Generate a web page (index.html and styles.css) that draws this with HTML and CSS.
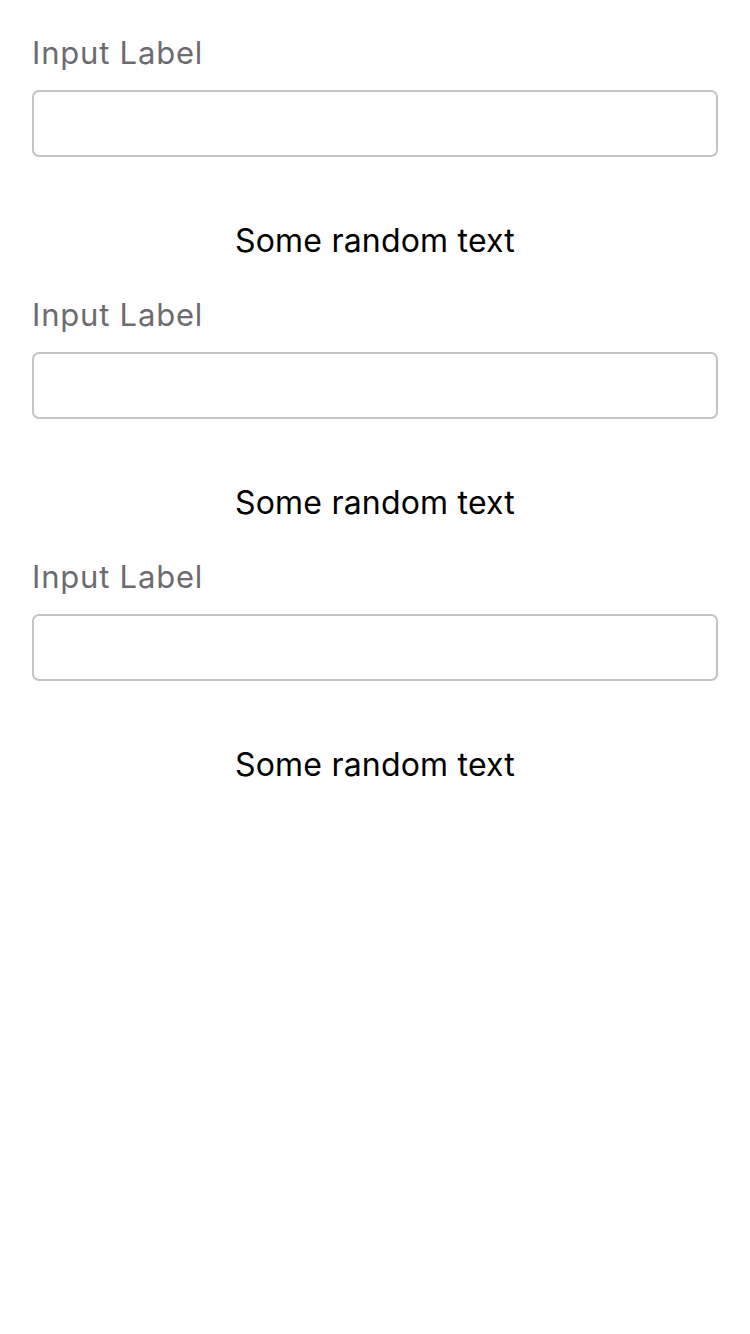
FILE: index.html
```html
<!DOCTYPE html>
<html>
<head>
<meta charset="utf-8">
<link rel="stylesheet" href="styles.css">
</head>
<body>
<main class="page">
  <section class="group">
    <label class="label">Input Label</label>
    <input class="field" type="text">
    <p class="text">Some random text</p>
  </section>
  <section class="group">
    <label class="label">Input Label</label>
    <input class="field" type="text">
    <p class="text">Some random text</p>
  </section>
  <section class="group">
    <label class="label">Input Label</label>
    <input class="field" type="text">
    <p class="text">Some random text</p>
  </section>
</main>
</body>
</html>
```
FILE: styles.css
```css
html, body {
  margin: 0;
  padding: 0;
  background: #ffffff;
}
.page {
  padding: 35px 32px 0;
  display: flex;
  flex-direction: column;
  gap: 36px;
  font-family: Inter, "Liberation Sans", sans-serif;
}
.group {
  display: flex;
  flex-direction: column;
}
.label {
  font-size: 31px;
  line-height: 36px;
  letter-spacing: 0.8px;
  color: #6c6c70;
}
.field {
  margin: 19px 0 0;
  box-sizing: border-box;
  height: 67px;
  width: 100%;
  border: 2px solid #c3c3c8;
  border-radius: 7px;
  background: #fff;
  padding: 0 16px;
  font: inherit;
  font-size: 30px;
  outline: none;
}
.text {
  margin: 64px 0 0;
  font-size: 32px;
  line-height: 40px;
  letter-spacing: 0.2px;
  color: #000;
  text-align: center;
}
```
